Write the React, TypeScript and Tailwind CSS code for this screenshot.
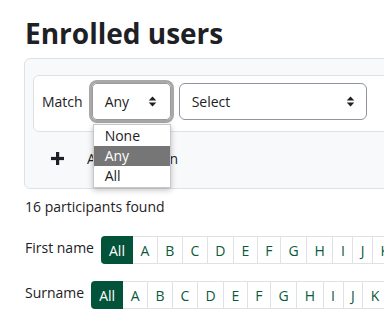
import React from "react";

const Arrows = () => (
  <svg width="9" height="13" viewBox="0 0 9 13" className="shrink-0">
    <path d="M4.5 1.5 L8.3 5.5 L0.7 5.5 Z" fill="#1d2125" />
    <path d="M4.5 11.5 L8.3 7.5 L0.7 7.5 Z" fill="#1d2125" />
  </svg>
);

const letters = ["A", "B", "C", "D", "E", "F", "G", "H", "I", "J", "K", "L", "M"];

const Bar = () => (
  <div className="flex shrink-0">
    <div className="h-[28px] w-[32px] flex items-center justify-center bg-[#03533a] text-white rounded-l-[4px] text-[14px]">All</div>
    {letters.map((l) => (
      <div key={l} className="h-[28px] px-[7.5px] flex items-center justify-center bg-white border border-l-0 border-[#dee2e6] text-[#0a5a3c] text-[14px]">{l}</div>
    ))}
  </div>
);

export default function App() {
  return (
    <div className="w-[384px] h-[320px] overflow-hidden bg-white text-[#1d2125]" style={{ fontFamily: '"Open Sans", "Noto Sans", sans-serif' }}>
      <div className="pl-[25px] pt-[15px]">
        <h2 className="text-[28px] leading-[36px] font-bold">Enrolled users</h2>
        <div className="mt-[7px] -ml-[1px] w-[420px] border border-[#dee2e6] rounded-[6px] bg-[#f8f9fa] pt-[16px] pl-[8px] pb-[13px]">
          <div className="h-[57px] border border-[#dee2e6] rounded-[6px] bg-white flex items-start pt-[7px] pl-[8px]">
            <span className="text-[14px] leading-[37px] mr-[9px]">Match</span>
            <div className="relative">
              <div className="w-[79px] h-[37px] border border-[#9a9a9a] shadow-[0_0_0_3px_#a8a8a8] rounded-[5px] flex items-center justify-between pl-[12px] pr-[13px] text-[14px]">
                <span>Any</span>
                <Arrows />
              </div>
              <div className="absolute left-[1px] top-[41px] w-[78px] bg-white border border-[#c8c8c8] shadow-[0_2px_6px_rgba(0,0,0,0.25)] py-[1px] text-[14px] z-10">
                <div className="h-[20px] leading-[20px] pl-[11px]">None</div>
                <div className="h-[20px] leading-[20px] pl-[11px] bg-[#767676] text-white">Any</div>
                <div className="h-[20px] leading-[20px] pl-[11px]">All</div>
              </div>
            </div>
            <div className="ml-[8px] w-[188px] h-[37px] border border-[#8f959e] rounded-[6px] flex items-center justify-between pl-[12px] pr-[11px] text-[14px]">
              <span>Select</span>
              <Arrows />
            </div>
          </div>
          <div className="flex items-center h-[43px] pl-[18px] pt-[10px]">
            <svg width="13" height="13" viewBox="0 0 13 13">
              <rect x="5" y="0" width="3.2" height="13" fill="#1d2125" />
              <rect x="0" y="4.9" width="13" height="3.2" fill="#1d2125" />
            </svg>
            <span className="ml-[23px] text-[14px]">Add condition</span>
          </div>
        </div>
        <p className="mt-[7px] text-[14px] leading-[22px]">16 participants found</p>
        <div className="mt-[18px] flex items-start">
          <span className="text-[14px] leading-[22px] pt-[1px] mr-[7px] shrink-0">First name</span>
          <Bar />
        </div>
        <div className="mt-[17px] flex items-start">
          <span className="text-[14px] leading-[22px] pt-[1px] mr-[7px] shrink-0">Surname</span>
          <Bar />
        </div>
      </div>
    </div>
  );
}
